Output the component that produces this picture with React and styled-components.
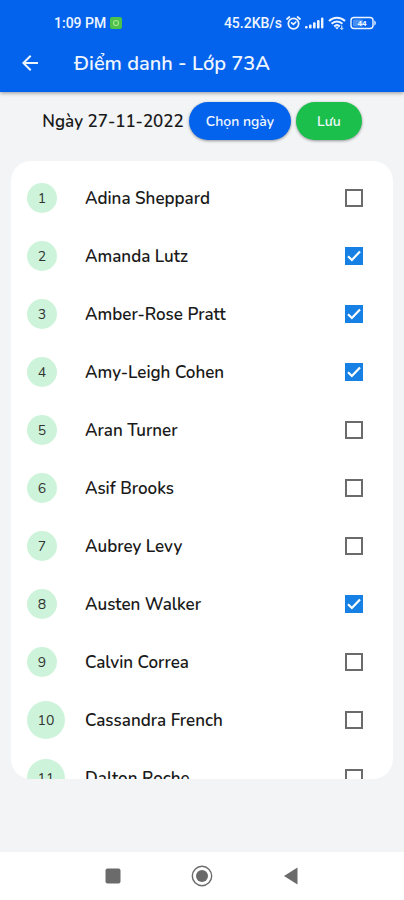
import React, { useState } from 'react'
import styled, { createGlobalStyle } from 'styled-components'
import { MdArrowBack } from 'react-icons/md'

const students = [
  { id: 1, name: 'Adina Sheppard', present: false },
  { id: 2, name: 'Amanda Lutz', present: true },
  { id: 3, name: 'Amber-Rose Pratt', present: true },
  { id: 4, name: 'Amy-Leigh Cohen', present: true },
  { id: 5, name: 'Aran Turner', present: false },
  { id: 6, name: 'Asif Brooks', present: false },
  { id: 7, name: 'Aubrey Levy', present: false },
  { id: 8, name: 'Austen Walker', present: true },
  { id: 9, name: 'Calvin Correa', present: false },
  { id: 10, name: 'Cassandra French', present: false },
  { id: 11, name: 'Dalton Roche', present: false },
]

const StatusIcons = () => (
  <>
    <svg width="15" height="14" viewBox="0 0 15 14" fill="none" stroke="currentColor" strokeWidth="1.7" strokeLinecap="round">
      <circle cx="7.5" cy="7.6" r="5.2" />
      <path d="M1 3 3.400 1M14 3 11.600 1M5.600 6.800l1.800 1.600 2.300-2.200" />
    </svg>
    <svg width="19" height="14" viewBox="0 0 19 14" fill="currentColor">
      <rect x="0" y="10" width="2.6" height="2.6" rx="1" />
      <rect x="4" y="8.4" width="2.6" height="4.2" rx="1" />
      <rect x="8" y="6.2" width="2.6" height="6.4" rx="1" />
      <rect x="12" y="4" width="2.6" height="8.6" rx="1" />
      <rect x="16" y="1.6" width="2.4" height="11" rx="1" />
    </svg>
    <svg width="18" height="14" viewBox="0 0 18 14" fill="none" stroke="currentColor" strokeWidth="2">
      <path d="M1 5C5.400.6 12.600.6 17 5M3.600 7.800c3-3 7.800-3 10.800 0M6.200 10.400c1.600-1.500 4-1.500 5.600 0" />
      <path d="M9 13.600 7 11.300h4z" fill="currentColor" stroke="none" />
      <path d="M13.800 9.500v4M12.300 12l1.500 1.500 1.500-1.500" strokeWidth="1" />
    </svg>
    <svg width="27" height="14" viewBox="0 0 27 14">
      <rect x="1" y="1.5" width="22" height="11" rx="3" fill="none" stroke="currentColor" strokeWidth="1.4" />
      <rect x="3" y="3.5" width="10" height="7" rx="1" fill="currentColor" opacity="0.3" />
      <path d="M24.300 4.500c2 .5 2 4.500 0 5z" fill="currentColor" />
      <text x="12" y="10" textAnchor="middle" fontSize="8" fontWeight="700" fill="currentColor">44</text>
    </svg>
  </>
)

const App = () => {
  const [list, setList] = useState(students)

  const toggle = (id) => {
    setList(list.map((s) => (s.id === id ? { ...s, present: !s.present } : s)))
  }

  return (
    <>
      <GlobalStyle />
      <Screen>
        <Header>
          <StatusBar>
            <div className="side">
              <span>1:09 PM</span>
              <svg width="12" height="12" viewBox="0 0 12 12">
                <rect width="12" height="12" rx="2" fill="#4cc24a" />
                <circle cx="6" cy="6" r="2.5" fill="none" stroke="#a5e58f" strokeWidth="1.2" />
              </svg>
            </div>
            <div className="side">
              <span>45.2KB/s</span>
              <StatusIcons />
            </div>
          </StatusBar>
          <TitleBar>
            <button type="button" aria-label="Quay lại"> <MdArrowBack /> </button>
            <h1>Điểm danh - Lớp 73A</h1>
          </TitleBar>
        </Header>

        <Toolbar>
          <h2>Ngày 27-11-2022</h2>
          <PillButton type="button" $color="#0363ec">Chọn ngày</PillButton>
          <PillButton type="button" $color="#1bbf4b" $wide>Lưu</PillButton>
        </Toolbar>

        <StudentList>
          {list.map((s) => (
            <StudentRow key={s.id}>
              <label htmlFor={`student-${s.id}`}>
                <NumberCell> <Badge $big={s.id > 9}>{s.id}</Badge> </NumberCell>
                <Name>{s.name}</Name>
                <CheckBox>
                  <input
                    type="checkbox"
                    id={`student-${s.id}`}
                    checked={s.present}
                    onChange={() => toggle(s.id)}
                  />
                  {s.present && (
                    <svg width="18" height="18" viewBox="0 0 18 18" fill="none" stroke="#fff" strokeWidth="2.2">
                      <path d="M3 9.200 6.900 13 15 4.600" />
                    </svg>
                  )}
                </CheckBox>
              </label>
            </StudentRow>
          ))}
        </StudentList>

        <SystemNav>
          <button type="button" aria-label="Recent apps">
            <svg width="22" height="22" viewBox="0 0 22 22" fill="currentColor">
              <rect x="3.5" y="3.5" width="15" height="15" rx="2" />
            </svg>
          </button>
          <button type="button" aria-label="Home">
            <svg width="22" height="22" viewBox="0 0 22 22">
              <circle cx="11" cy="11" r="9.7" fill="none" stroke="currentColor" strokeWidth="1.4" />
              <circle cx="11" cy="11" r="6" fill="currentColor" />
            </svg>
          </button>
          <button type="button" aria-label="Back">
            <svg width="22" height="22" viewBox="0 0 22 22" fill="currentColor">
              <path d="M17.500 2.500v17L4 11z" />
            </svg>
          </button>
        </SystemNav>
      </Screen>
    </>
  )
}

export default App

const GlobalStyle = createGlobalStyle`
  *{
    box-sizing: border-box;
    margin: 0;
    padding: 0;
  }

  body{
    font-family: "Nunito", "Open Sans", "Noto Sans", sans-serif;
    background: #f2f4f6;
    color: #1a1a1a;
  }

  button{
    font-family: inherit;
    color: inherit;
    border: none;
    background: none;
    cursor: pointer;
  }
`

const Screen = styled.div`
  display: flex;
  flex-direction: column;
  height: 100vh;
`

const Header = styled.header`
  background: #0363ec;
  color: #eef5ff;
  box-shadow: 0 1px 4px rgba(0, 0, 0, 0.4);
`

const StatusBar = styled.div`
  display: flex;
  justify-content: space-between;
  padding: 14px 27px 2px 54px;
  font-family: Roboto, sans-serif;
  font-size: 14px;
  font-weight: 500;
  line-height: 18px;

  .side{
    display: flex;
    align-items: center;
    gap: 4px;
  }
`

const TitleBar = styled.div`
  display: flex;
  align-items: center;
  gap: 32px;
  height: 58px;
  padding: 0 18px;

  button{
    display: flex;
    font-size: 24px;
  }

  h1{
    font-size: 20px;
    font-weight: 600;
  }
`

const Toolbar = styled.div`
  display: flex;
  align-items: center;
  justify-content: center;
  gap: 5px;
  padding: 10px 16px 21px;

  h2{
    font-size: 17px;
    font-weight: 600;
  }
`

const PillButton = styled.button`
  height: 38px;
  padding: 0 ${({ $wide }) => ($wide ? '21px' : '17px')};
  border-radius: 19px;
  background: ${({ $color }) => $color};
  color: #f2f8ff;
  font-size: 14px;
  font-weight: 600;
  box-shadow: 0 1px 3px rgba(0, 0, 0, 0.4);
`

const StudentList = styled.ul`
  flex: 1;
  min-height: 0;
  margin: 0 11px 73px;
  padding-top: 8px;
  overflow-y: auto;
  scrollbar-width: none;
  list-style: none;
  background: #fff;
  border-radius: 20px;
`

const StudentRow = styled.li`
  label{
    display: flex;
    align-items: center;
    height: 58px;
    padding: 0 30px 0 16px;
    cursor: pointer;
  }
`

const NumberCell = styled.span`
  display: flex;
  width: 58px;
`

const Badge = styled.span`
  display: flex;
  align-items: center;
  justify-content: center;
  width: ${({ $big }) => ($big ? '38px' : '30px')};
  height: ${({ $big }) => ($big ? '38px' : '30px')};
  border-radius: 50%;
  background: #cdf4da;
  color: #333;
  font-size: 14px;
`

const Name = styled.span`
  flex: 1;
  font-size: 17px;
  font-weight: 600;
`

const CheckBox = styled.span`
  display: grid;

  input, svg{
    grid-area: 1 / 1;
  }

  input{
    appearance: none;
    width: 18px;
    height: 18px;
    border: 2px solid #6b6b6b;
    cursor: pointer;

    &:checked{
      border-color: #1680e4;
      background: #1680e4;
    }
  }

  svg{
    pointer-events: none;
  }
`

const SystemNav = styled.nav`
  display: flex;
  align-items: center;
  justify-content: center;
  gap: 67px;
  height: 48px;
  background: #fff;
  color: #6b6b6b;

  button{
    display: flex;
  }
`
